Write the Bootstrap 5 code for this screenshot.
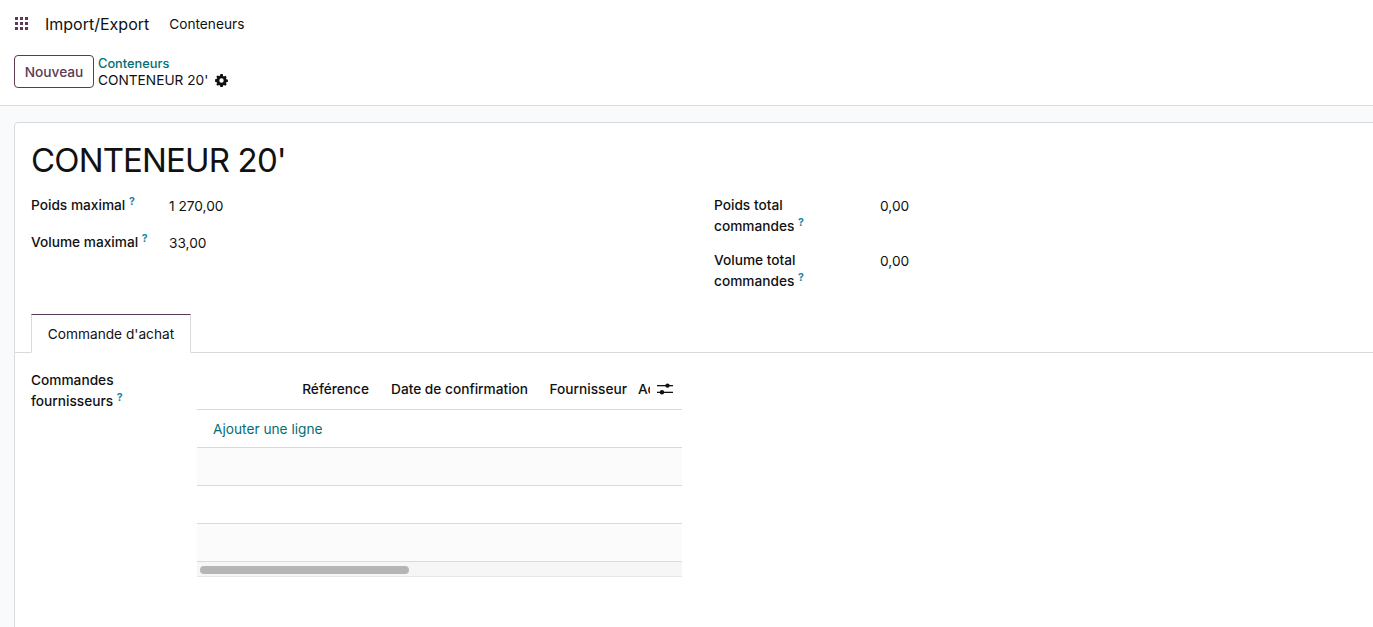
<!DOCTYPE html>
<html lang="fr">
<head>
<meta charset="utf-8">
<title>Conteneurs</title>
<link rel="stylesheet" href="https://cdn.jsdelivr.net/npm/bootstrap@5.3.0/dist/css/bootstrap.min.css">
<style>
html,body{height:627px;overflow:hidden}
body{font-family:Inter,"Liberation Sans",sans-serif;font-size:13.7px;color:#111;background:#f9fafb;line-height:21px}
.top-bar{height:46px;background:#fff;padding:2px 0 0 15px}
.apps-icon{margin-bottom:1px}
.app-name{font-size:16px;color:#111;margin-left:17px;margin-right:20px}
.menu-item{font-size:13.7px;color:#111}
.ctrl-panel{height:60px;background:#fff;border-bottom:1px solid #d8dadd;padding:9px 14px 0}
.btn-new{height:33px;width:80px;padding:1px 0 0;font-size:13.7px;font-weight:500;color:#5b3a56;border:1px solid #5b3a56;border-radius:4px;background:#fff;margin-right:4px}
.crumbs{line-height:16px}
.crumb-link{font-size:12.8px;font-weight:500;color:#016f74;text-decoration:none;display:block;margin-top:1px}
.crumb-now{font-size:13.7px;color:#111;display:flex;align-items:center;gap:7px}
.sheet{margin:16px -40px 0 14px;width:1400px;height:520px;background:#fff;border:1px solid #d8dadd;border-radius:4px 0 0 0;padding-top:16px}
.rec-title{font-size:33px;letter-spacing:-.85px;line-height:42px;font-weight:400;color:#111;margin:0 0 0 16px}
.groups{width:1357px;margin:0;padding:14px 0 0 16px}
.grp-left{width:683px}
.lbl{font-weight:500;line-height:21px}
.lbl-a{width:138px}
.lbl-b{width:166px}
.val{padding-top:1px}
.field-line{margin-bottom:15px}
.field-line-b{margin-bottom:13px}
.tip{font-size:10.5px;font-weight:700;color:#1f7fa3;position:static;vertical-align:5px;line-height:0}
.tab-strip{margin-top:22px;padding-left:16px;border-bottom:1px solid #d8dadd}
.tab-strip .nav-link.active{height:39px;width:160px;margin-bottom:-1px;padding:9px 0 0;text-align:center;color:#111;font-size:13.7px;border-radius:0;border:1px solid #d8dadd;border-top-color:#5b3a56;border-bottom-color:#fff;background:#fff}
.tab-body{padding:16px 0 0 16px}
.lbl-c{width:166px;padding-top:1px}
.grid-box{width:485px;margin-top:1px}
.o2m{table-layout:fixed;width:485px;margin:0;color:#111;font-size:13.7px}
.o2m th,.o2m td{height:38px;padding:0;border-bottom:1px solid #d8dadd;vertical-align:middle}
.o2m th{font-weight:500;height:39px;white-space:nowrap;overflow:hidden}
.o2m th.cell-end{text-align:right;padding-right:11px}
.o2m th.cell-start{padding-left:11px}
.o2m td.add-cell{padding-top:2px}
.o2m tbody tr:nth-child(even) td{background:#fbfbfb}
.opt-icon{display:block;margin-left:7px}
.add-link{color:#016f74;text-decoration:none;margin-left:16px}
.bar-track{height:15px;background:#f6f6f6;border-bottom:1px solid #e6e6e6;padding:4px 0 0 3px}
.bar-thumb{width:209px;height:8px;background:#b5b5b5;border-radius:4px}
</style>
</head>
<body>
<nav class="top-bar d-flex align-items-center">
  <svg class="apps-icon" width="13" height="13" viewBox="0 0 13 13" fill="#5b3a56" aria-hidden="true">
    <rect x="0" y="0" width="3" height="3"/><rect x="5" y="0" width="3" height="3"/><rect x="10" y="0" width="3" height="3"/>
    <rect x="0" y="5" width="3" height="3"/><rect x="5" y="5" width="3" height="3"/><rect x="10" y="5" width="3" height="3"/>
    <rect x="0" y="10" width="3" height="3"/><rect x="5" y="10" width="3" height="3"/><rect x="10" y="10" width="3" height="3"/>
  </svg>
  <span class="app-name">Import/Export</span>
  <span class="menu-item">Conteneurs</span>
</nav>
<div class="ctrl-panel d-flex align-items-start">
  <button type="button" class="btn btn-new">Nouveau</button>
  <div class="crumbs">
    <a href="#" class="crumb-link">Conteneurs</a>
    <span class="crumb-now">CONTENEUR 20'
      <svg width="13" height="13" viewBox="0 0 16 16" fill="#111" aria-hidden="true"><path fill-rule="evenodd" d="M9.6.6 10 2.5l1 .5 1.8-.8 1.5 1.5-.8 1.8.5 1.1 1.9.5v2.4l-1.9.6-.5 1 .8 1.8-1.5 1.5-1.8-.8-1 .5-.5 1.9H6.6l-.5-1.9-1.1-.5-1.8.8-1.5-1.5.8-1.8-.5-1-1.9-.6V6.600l1.900-.5.500-1.100-.8-1.800 1.500-1.500 1.800.8 1.100-.5.500-1.900h3zM8 5.300a2.700 2.700 0 1 0 0 5.400 2.700 2.700 0 0 0 0-5.400z"/></svg>
    </span>
  </div>
</div>
<main class="sheet">
  <h1 class="rec-title">CONTENEUR 20'</h1>
  <div class="groups d-flex">
    <div class="grp-left">
      <div class="d-flex field-line"><div class="lbl lbl-a">Poids maximal <sup class="tip">?</sup></div><div class="val">1 270,00</div></div>
      <div class="d-flex field-line"><div class="lbl lbl-a">Volume maximal <sup class="tip">?</sup></div><div class="val">33,00</div></div>
    </div>
    <div>
      <div class="d-flex field-line-b"><div class="lbl lbl-b">Poids total<br>commandes <sup class="tip">?</sup></div><div class="val">0,00</div></div>
      <div class="d-flex"><div class="lbl lbl-b">Volume total<br>commandes <sup class="tip">?</sup></div><div class="val">0,00</div></div>
    </div>
  </div>
  <ul class="nav nav-tabs tab-strip">
    <li class="nav-item"><a class="nav-link active" href="#">Commande d'achat</a></li>
  </ul>
  <div class="tab-body d-flex">
    <div class="lbl lbl-c">Commandes<br>fournisseurs <sup class="tip">?</sup></div>
    <div class="grid-box">
      <table class="table o2m">
        <colgroup><col style="width:183px"><col style="width:160px"><col style="width:98px"><col style="width:12px"><col style="width:32px"></colgroup>
        <thead>
          <tr>
            <th class="cell-end">Référence</th>
            <th class="cell-start">Date de confirmation</th>
            <th class="cell-end">Fournisseur</th>
            <th>Acheteur</th>
            <th>
              <svg class="opt-icon" width="16" height="14" viewBox="0 0 16 14" fill="#111" aria-hidden="true"><rect x="0" y="3" width="16" height="1.300"/><rect x="0" y="9.700" width="16" height="1.300"/><circle cx="10.500" cy="3.600" r="2.200"/><circle cx="5" cy="10.300" r="2.200"/></svg>
            </th>
          </tr>
        </thead>
        <tbody>
          <tr><td class="add-cell" colspan="5"><a href="#" class="add-link">Ajouter une ligne</a></td></tr>
          <tr><td colspan="5"></td></tr>
          <tr><td colspan="5"></td></tr>
          <tr><td colspan="5"></td></tr>
        </tbody>
      </table>
      <div class="bar-track"><div class="bar-thumb"></div></div>
    </div>
  </div>
</main>
</body>
</html>
